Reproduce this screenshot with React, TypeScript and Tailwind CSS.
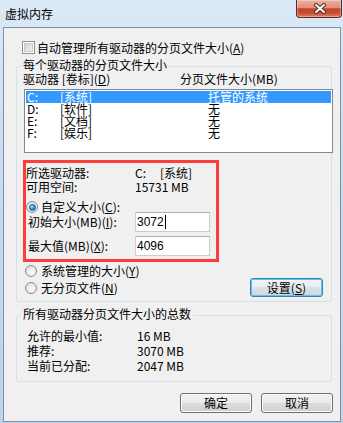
import React from 'react';

const M: React.FC<{ c: string }> = ({ c }) => (
  <span className="underline underline-offset-[1px]">{c}</span>
);

const CheckBox: React.FC = () => (
  <div className="w-[13px] h-[13px] shrink-0 border border-[#8f8f8f] bg-white p-[1px]">
    <div className="w-full h-full border border-[#c6c9cd] bg-[linear-gradient(135deg,#cdd1d6,#f4f4f4)]" />
  </div>
);

const Radio: React.FC<{ checked?: boolean }> = ({ checked }) => (
  <div className="w-[12px] h-[12px] shrink-0 rounded-full border border-[#8c8c8c] bg-[radial-gradient(circle_at_60%_65%,#ffffff,#d6d6d6)] flex items-center justify-center">
    {checked && (
      <div className="w-[7px] h-[7px] rounded-full border border-[#1b4f86] bg-[radial-gradient(circle_at_35%_30%,#9be6ff,#2a8ee0_55%,#0d4a8e)]" />
    )}
  </div>
);

const Button: React.FC<{ children: React.ReactNode; focused?: boolean }> = ({ children, focused }) => (
  <div
    className={
      focused
        ? 'w-[73px] h-[19px] rounded-[3px] border border-[#3c7fb1] bg-[linear-gradient(#f2f4f6,#e9edf0_50%,#dbe1e6_50%,#cfd6dc)] shadow-[inset_0_0_0_1px_#58c8f0] flex items-center justify-center'
        : 'w-[72px] h-[20px] rounded-[3px] border border-[#707070] bg-[linear-gradient(#f2f2f2,#ebebeb_50%,#dddddd_50%,#cfcfcf)] shadow-[inset_0_0_0_1px_#fcfcfc] flex items-center justify-center'
    }
  >
    <span className="leading-[14px]">{children}</span>
  </div>
);

const Input: React.FC<{ value: string; caret?: boolean }> = ({ value, caret }) => (
  <div className="w-[75px] h-[20px] border border-[#c9ccd3] border-t-[#abadb3] bg-white pl-[1px] flex items-center font-['Liberation_Sans',sans-serif] text-[12px]">
    <span className="leading-[14px]">{value}</span>
    {caret && <span className="inline-block w-px h-[14px] bg-black ml-px" />}
  </div>
);

const drives = [
  { d: 'C:', label: '[系统]', size: '托管的系统', selected: true },
  { d: 'D:', label: '[软件]', size: '无' },
  { d: 'E:', label: '[文档]', size: '无' },
  { d: 'F:', label: '[娱乐]', size: '无' },
];

export default function App() {
  return (
    <div className="w-[343px] h-[423px] flex flex-col bg-[linear-gradient(#dce9f6,#c8dbef_40%,#bcd3ea)] font-['Noto_Sans_CJK_SC',sans-serif] text-[12px] text-black">
      {/* title bar */}
      <div className="h-[27px] shrink-0 flex items-start justify-between pl-[5px] pr-px">
        <span className="mt-[7px] leading-[14px]">虚拟内存</span>
        <div className="w-[46px] h-[18px] rounded-b-[4px] border border-t-0 border-[#5e2a22] bg-[linear-gradient(#eab0a3,#df8f7d_45%,#c7432a_52%,#c94d31_78%,#dc8467)] shadow-[inset_0_0_0_1px_rgba(255,255,255,0.3)] flex items-center justify-center pl-[2px]">
          <svg width="14" height="11" viewBox="0 0 14 11">
            <path d="M3 2 L11 9 M11 2 L3 9" stroke="#47302c" strokeWidth="4" strokeLinecap="round" />
            <path d="M3 2 L11 9 M11 2 L3 9" stroke="#ffffff" strokeWidth="2" strokeLinecap="round" />
          </svg>
        </div>
      </div>

      {/* client area */}
      <div className="flex-1 ml-[3px] mr-[2px] mb-[1px] border border-[#7c90a8] bg-[#f0f0f0] flex flex-col">
        <div className="mt-[13px] ml-[18px] h-[13px] flex items-center gap-[2px]">
          <CheckBox />
          <span className="leading-[13px]">
            自动管理所有驱动器的分页文件大小(<M c="A" />)
          </span>
        </div>

        {/* per-drive group */}
        <div className="mt-[12px] ml-[12px] w-[316px] rounded-[3px] border border-[#d5dfe5] flex flex-col">
          <div className="-mt-[9px] ml-[4px] w-fit px-[2px] bg-[#f0f0f0] leading-[13px]">每个驱动器的分页文件大小</div>
          <div className="mt-[1px] pl-[6px] flex leading-[13px]">
            <span className="w-[157px]">
              驱动器 [卷标](<M c="D" />)
            </span>
            <span>分页文件大小(MB)</span>
          </div>
          <div className="mt-[4px] ml-[7px] w-[309px] h-[64px] shrink-0 border border-[#828790] bg-white pt-px px-px">
            {drives.map((r) => (
              <div
                key={r.d}
                className={
                  r.selected
                    ? 'h-[12px] flex pl-px leading-[12px] bg-[#3399ff] text-white'
                    : 'h-[12px] flex pl-px leading-[12px]'
                }
              >
                <span className="w-[33px]">{r.d}</span>
                <span className="w-[148px]">{r.label}</span>
                <span>{r.size}</span>
              </div>
            ))}
          </div>

          {/* highlighted box */}
          <div className="mt-[7px] ml-[6px] w-[196px] border-[3px] border-[#ff3b3b] flex flex-col">
            <div className="mt-[3px] flex leading-[14px]">
              <span className="w-[109px]">所选驱动器:</span>
              <span className="w-[25px]">C:</span>
              <span>[系统]</span>
            </div>
            <div className="flex leading-[14px]">
              <span className="w-[109px]">可用空间:</span>
              <span>15731 MB</span>
            </div>
            <div className="mt-[8px] h-[10px] flex items-center gap-[3px]">
              <Radio checked />
              <span className="leading-[14px]">
                自定义大小(<M c="C" />):
              </span>
            </div>
            <div className="h-[20px] flex items-center">
              <span className="w-[109px] pl-[2px] leading-[14px]">
                初始大小(MB)(<M c="I" />):
              </span>
              <Input value="3072" caret />
            </div>
            <div className="mt-[4px] mb-[3px] h-[20px] flex items-center">
              <span className="w-[109px] pl-[2px] leading-[14px]">
                最大值(MB)(<M c="X" />):
              </span>
              <Input value="4096" />
            </div>
          </div>

          <div className="mt-[3px] h-[12px] pl-[8px] flex items-center gap-[4px]">
            <Radio />
            <span className="leading-[14px]">
              系统管理的大小(<M c="Y" />)
            </span>
          </div>
          <div className="mt-[1px] mb-[4px] h-[19px] pl-[8px] pr-[8px] flex items-center justify-between">
            <div className="flex items-center gap-[4px]">
              <Radio />
              <span className="leading-[14px]">
                无分页文件(<M c="N" />)
              </span>
            </div>
            <Button focused>
              设置(<M c="S" />)
            </Button>
          </div>
        </div>

        {/* totals group */}
        <div className="mt-[13px] ml-[12px] w-[316px] rounded-[3px] border border-[#d5dfe5] flex flex-col">
          <div className="-mt-[9px] ml-[4px] w-fit px-[2px] bg-[#f0f0f0] leading-[13px]">所有驱动器分页文件大小的总数</div>
          <div className="mt-[8px] mb-[8px] pl-[10px] flex flex-col">
            <div className="flex leading-[15px]">
              <span className="w-[110px]">允许的最小值:</span>
              <span>16 MB</span>
            </div>
            <div className="flex leading-[15px]">
              <span className="w-[110px]">推荐:</span>
              <span>3070 MB</span>
            </div>
            <div className="flex leading-[15px]">
              <span className="w-[110px]">当前已分配:</span>
              <span>2047 MB</span>
            </div>
          </div>
        </div>

        <div className="mt-[11px] pr-[7px] flex justify-end gap-[9px]">
          <Button>确定</Button>
          <Button>取消</Button>
        </div>
      </div>
    </div>
  );
}
